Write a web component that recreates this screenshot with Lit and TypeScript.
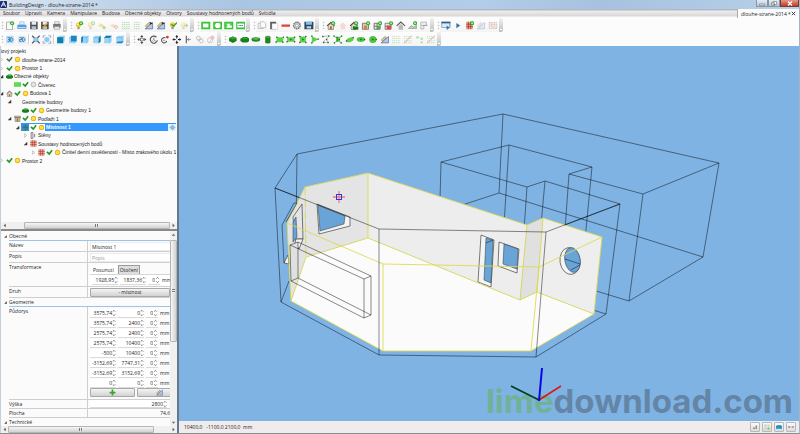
import { LitElement, html, svg, css, nothing } from "lit";
import { customElement } from "lit/decorators.js";
import { classMap } from "lit/directives/class-map.js";

type Pt = [number, number];
const pts = (list: Pt[]) => list.map((p) => p.join(",")).join(" ");

/* ---------- icon pieces, drawn on a 12 x 12 grid ---------- */
const plus = svg`<circle cx="9" cy="3" r="2.7" fill="#1fa01f"/><path d="M9 1.4v3.2M7.4 3h3.2" stroke="#d8ffd0" stroke-width="1"/>`;
const bulb = (c = "#f2c91c") => svg`<circle cx="5.5" cy="5" r="3.4" fill="${c}"/><circle cx="4.7" cy="4.2" r="1.3" fill="#fff3a0"/><rect x="4.2" y="8.2" width="2.8" height="2.6" fill="#8d8d8d"/>`;
const house = (c: string) => svg`<path d="M1 6.5L6 2l5 4.5" fill="none" stroke="#54483c" stroke-width="1.5"/><path d="M2.5 6.3v5h7v-5L6 3.4z" fill="#e6e2da" stroke="#6b6258" stroke-width=".8"/><rect x="4.6" y="7" width="2.8" height="4" fill="${c}"/>`;
const dots = (c: string, n = 4) => svg`${[0, 1, 2, 3].map((r) => Array.from({ length: n }, (_, q) => svg`<circle cx="${1.8 + q * 2.8}" cy="${1.8 + r * 2.8}" r=".8" fill="${c}"/>`))}`;
const greenBox = (inner: unknown) => svg`<rect x="0" y="1" width="12" height="10" fill="#35c135"/><rect x="1.4" y="2.4" width="9.2" height="7.2" fill="#4bd04b"/>${inner}`;
const cad = svg`<path d="M1 10.5h10V2z" fill="#b9c6e6" stroke="#4a62a8" stroke-width=".9"/><path d="M1.5 6.5L6 2l2 1.5-5 5z" fill="#e8cf7c" stroke="#5a5a5a" stroke-width=".7"/>`;
const cube = (side: number) => svg`<path d="M1 3.5L3.5 1H11v7.5L8.5 11H1z" fill="#9bd5f5"/><path d="M1 3.5h7.5V11M8.5 3.5L11 1" fill="none" stroke="#5fb2e0" stroke-width=".8"/>${[
  svg`<rect x="1" y="3" width="8" height="8" fill="#0f7db0"/>`,
  svg`<rect x="3.5" y="1" width="7.5" height="7.5" fill="#1b86bd"/>`,
  svg`<path d="M1 3.5L3.5 1v7.5L1 11z" fill="#1b86bd"/>`,
  svg`<path d="M8.5 3.5L11 1v7.5L8.5 11z" fill="#0f76ab"/>`,
  svg`<path d="M1 3.5L3.5 1H11L8.5 3.5z" fill="#0f76ab"/>`,
  svg`<path d="M1 11l2.500-2.500H11L8.500 11z" fill="#1b86bd"/>`,
][side]}`;
const handles = (list: Pt[]) => svg`${list.map(([x, y]) => svg`<rect x="${x - 0.9}" y="${y - 0.9}" width="1.800" height="1.800" fill="#176617"/>`)}`;
const shape = (list: Pt[]) => svg`<polygon points="${pts(list)}" fill="#5ad04c"/>${handles(list)}`;
const arrows = svg`<path d="M6 0l2 2.600H4zM6 12l2-2.600H4zM0 6l2.600-2v4zM12 6L9.400 4v4z" fill="#333"/>`;

const icons: Record<string, unknown> = {
  fileNew: svg`<path d="M1.500 1.500h6l2 2v8h-8z" fill="#fafafa" stroke="#9a9a9a"/>${plus}`,
  open: svg`<path d="M3 1h6v4H3z" fill="#dfeefc" stroke="#7fa6d0" stroke-width=".6"/><path d="M0 5h12v5.500H0z" fill="#5a9be0"/><path d="M1 8h10v1.500H1z" fill="#b8dcfa"/>`,
  save: svg`<path d="M1 1h10v10H1z" fill="#4a4f58"/><path d="M3 1h6v4H3z" fill="#e8edf2"/><path d="M3 7h6v4H3z" fill="#b8bfc7"/>`,
  saveAs: svg`<path d="M1 1h10v10H1z" fill="#4a4238"/><path d="M3 1h6v4H3z" fill="#e8edf2"/><path d="M3 7h6v4H3z" fill="#b8bfc7"/><path d="M3 9L9.500 2.500" stroke="#e0a02c" stroke-width="1.800"/>`,
  print: svg`<path d="M3 1h6v3H3z" fill="#fff" stroke="#777" stroke-width=".7"/><path d="M1 4h10v5H1z" fill="#73777c"/><path d="M2.500 7.500h7V11h-7z" fill="#eee" stroke="#888" stroke-width=".7"/>`,
  bulbAdd: svg`${bulb()}${plus}`,
  bulbFade: svg`<g opacity=".35">${bulb()}${plus}</g>`,
  spotA: svg`<g opacity=".55"><path d="M1 7l3-4 4 2 3 5-5-2z" fill="#e7d44a"/><circle cx="9" cy="9" r="2" fill="#76bd4a"/></g>`,
  spotB: svg`<g opacity=".5"><path d="M1 6l4-2 4 3-3 2z" fill="#e7d070"/><circle cx="9" cy="8" r="2" fill="none" stroke="#e06050"/></g>`,
  gridA: svg`<g opacity=".6">${dots("#5cc45c")}</g>`,
  gridB: svg`<g opacity=".6">${dots("#74bd74", 3)}</g>`,
  cadAdd: svg`${cad}<path d="M7 1l4 2-3 2z" fill="#222"/>`,
  bulbOk: svg`${bulb()}<path d="M4 4l3 3 4.500-5" fill="none" stroke="#3ca52c" stroke-width="1.800"/>`,
  bulbGo: svg`<g opacity=".35">${bulb()}<path d="M6 6h5M9 4l2 2-2 2" stroke="#3ca52c" stroke-width="1.500" fill="none"/></g>`,
  gRect: greenBox(svg`<rect x="2.500" y="3.500" width="7" height="5" fill="#fff"/>`),
  gPoly: greenBox(svg`<path d="M4 2.800h4l2 3.200-2 3.200H4L2 6z" fill="#fff"/>`),
  gCut: greenBox(svg`<path d="M2.500 3.500h6L6.500 6H10v3H2.500l2-3z" fill="#fff"/>`),
  gCad: greenBox(svg`<rect x="1.500" y="3.500" width="9" height="5" fill="#fff"/><path d="M3 6h6" stroke="#4a62c8" stroke-width="1.500" stroke-dasharray="1.500 .700"/>`),
  copy: svg`<path d="M1 3h6l1 1v6H1z" fill="#f6f6f6" stroke="#b5b5b5"/><path d="M4 1h5l2 2v6H4z" fill="#fafafa" stroke="#b5b5b5"/>`,
  paste: svg`<path d="M1 1h8v10H1z" fill="#5b5b5b"/><path d="M3.500 3.500H11V11H3.500z" fill="#fdfdfd" stroke="#bbb" stroke-width=".6"/>`,
  remove: svg`<rect x="0" y="4.500" width="12" height="3" rx="1" fill="#df4338"/>`,
  gear: svg`<circle cx="6" cy="6" r="4.300" fill="#e8e8e8" stroke="#777" stroke-width="2" stroke-dasharray="2.200 .700"/><circle cx="6" cy="6" r="2" fill="#fff" stroke="#888"/>`,
  saveBlue: svg`<path d="M0 1h12v10H0z" fill="#2f4560"/><path d="M2 1h8v4H2z" fill="#7cc4ef"/><path d="M3 7h6v3H3z" fill="#c8d5df"/>`,
  houseAdd: svg`${house("#b86d28")}${plus}`,
  houseFade: svg`<path d="M1 6.500L6 2l5 4.500H9v4.500H3V6.500z" fill="#f6cfc8" opacity=".8"/>`,
  houseGreen: svg`${house("#2e9a2e")}<rect x="5" y="7.500" width="7" height="4" fill="#187a18"/>${plus}`,
  floorAdd: svg`<path d="M1.500 3h8v8h-8z" fill="#d8cfc2" stroke="#6b5a48"/><path d="M3.500 6h4v5h-4z" fill="#c98a3c"/>${plus}`,
  roomAdd: svg`<path d="M1 3h8v8H1zM1 7h8M5 3v8" fill="#e8e8e8" stroke="#555"/><path d="M5 7h4v4H5z" fill="#3cb83c"/>${plus}`,
  roomRed: svg`<path d="M1 3h8v8H1zM1 7h8" fill="#e8e8e8" stroke="#666"/><path d="M3 6h6v5H3z" fill="#e24a3c"/>${plus}`,
  roof: svg`<path d="M.5 6.500L6 1.500l5.500 5" fill="none" stroke="#555" stroke-width="1.500"/><path d="M3 6.500v5h6v-5L6 4z" fill="#b9b9b9"/>`,
  terrain: svg`<path d="M0 10l4-4 3 2 4-2v4z" fill="#c3c8be" stroke="#7d8377" stroke-width=".7"/>${plus}`,
  wall: svg`<path d="M2 1.500h7.500v4L6 6v4.500H2z" fill="#eee" stroke="#aaa"/><path d="M3 6h8" stroke="#999"/>`,
  calc: svg`<rect x="0" y="1" width="12" height="8" fill="#6a9cc4"/><rect x="1" y="3" width="9.500" height="5" fill="#dcebf6"/><path d="M0 1h12v2H0z" fill="#3c5876"/><path d="M7 6l4 3-4 3z" fill="#2b77bd"/>`,
  play: svg`<path d="M4 2.500L9 6 4 9.500z" fill="#2c72b8"/>`,
  gridRed: svg`<path d="M1 1h9v10H1z" fill="#eda08c"/><path d="M4 1v10M7 1v10M1 4.300h9M1 7.600h9" stroke="#8f3226" stroke-width=".9"/>${plus}`,
  cadFade: svg`<g opacity=".35">${cad}</g>`,
  frameFade: svg`<g opacity=".5"><rect x="1" y="2" width="10" height="8" fill="#f4cfc8" stroke="#9a7a74" stroke-dasharray="2 1"/><rect x="4" y="4.500" width="4" height="3" fill="#fff" stroke="#b36a5c" stroke-width=".7"/></g>`,
  v3d: svg`<rect x="1" y="1" width="10" height="10" fill="#b7def7"/><path d="M3 3.500h2.500V6H3.500M5.500 6v2.500H3M7 3.500v5h1.500L10 7V5L8.500 3.500z" fill="none" stroke="#2c79b3" stroke-width="1.100"/>`,
  v2d: svg`<rect x="1" y="1" width="10" height="10" fill="#cfe8f9"/><path d="M3 3.500h2.500V6H3v2.500h2.500M7 3.500v5h1.500L10 7V5L8.500 3.500z" fill="none" stroke="#3a6a92" stroke-width="1.100"/>`,
  zoomAll: svg`<circle cx="6" cy="6" r="3.500" fill="#8dcbf0"/><path d="M1 1l3 3M11 1L8 4M1 11l3-3M11 11L8 8" stroke="#555" stroke-width="1.500"/>`,
  zoomSel: svg`<circle cx="6" cy="6" r="3.500" fill="#8dcbf0"/><path d="M1 4V1h3M8 1h3v3M11 8v3H8M4 11H1V8" fill="none" stroke="#8ab" stroke-width="1.200"/>`,
  c0: cube(0), c1: cube(1), c2: cube(2), c3: cube(3), c4: cube(4), c5: cube(5),
  move: svg`${arrows}<path d="M6 2v8M2 6h8" stroke="#777"/><rect x="4.200" y="4.200" width="3.600" height="3.600" fill="#fff" stroke="#555" stroke-width=".8"/>`,
  rotate: svg`<path d="M9.500 3A4.700 4.700 0 1 0 10.700 7" fill="none" stroke="#555" stroke-width="1.500"/><path d="M6 3.500v3l2.500 1.500M3.500 7l2 2" fill="none" stroke="#666"/>`,
  rotateRef: svg`<path d="M7 4A3.500 3.500 0 1 0 8.500 8" fill="none" stroke="#555" stroke-width="1.400"/><path d="M3.500 7h3" stroke="#777"/><circle cx="9.500" cy="2.700" r="1.800" fill="#d8351c"/>`,
  moveBold: svg`${arrows}<path d="M6 1v3.500M6 7.500V11M1 6h3.500M7.500 6H11" stroke="#222" stroke-width="1.400"/>`,
  align: svg`<path d="M4 1v10" stroke="#444" stroke-width="1.300"/><path d="M5 6h5M8 4L5.500 6 8 8" stroke="#777" fill="none"/>`,
  chain: svg`<g opacity=".5" fill="none" stroke="#777"><circle cx="4" cy="4" r="2.500"/><circle cx="8" cy="8" r="2.500"/><path d="M3 8l6-4"/></g>`,
  chainCut: svg`<g opacity=".5"><circle cx="5" cy="7" r="3.500" fill="none" stroke="#888"/><circle cx="8" cy="3.500" r="2.700" fill="#ef8d80"/><path d="M3 10l7-7" stroke="#999"/></g>`,
  box: svg`<path d="M1 4l5-2 5 2v4l-5 2.500L1 8z" fill="#16801a"/><path d="M1 4l5 2 5-2-5-2z" fill="#35a336"/>`,
  prism: svg`<path d="M0 5l4-2.500h5L12 5v3l-3 2H3L0 8z" fill="#16801a"/><path d="M2 5l3-1.500h3L10 5z" fill="#48b548"/>`,
  ell3: svg`<ellipse cx="6" cy="6" rx="5.800" ry="3" fill="#1b8a20"/><ellipse cx="6" cy="5" rx="4" ry="1.300" fill="#55bd55"/>`,
  cyl: svg`<path d="M2.500 2.500v7.500h7V2.500z" fill="#1b861f"/><ellipse cx="6" cy="2.500" rx="3.500" ry="1.500" fill="#4a9f4a"/><ellipse cx="6" cy="10" rx="3.500" ry="1.300" fill="#1b861f"/>`,
  s1: shape([[2, 3], [11, 3], [10, 9.5], [1, 9.5]]),
  s2: svg`${shape([[1, 3], [11, 3], [11, 9], [1, 9]])}${handles([[6, 6]])}`,
  s3: svg`${shape([[2, 2], [10, 2], [10, 10], [2, 10]])}${handles([[6, 6]])}`,
  s4: shape([[2, 1.5], [10.5, 5.5], [2, 10.5]]),
  s5: svg`<path d="M2 2l8-1-3 5 2 4H3l2-4" fill="none" stroke="#777" stroke-dasharray="1 .6"/>${handles([[2, 2], [10, 1.500], [7, 6], [9, 10], [3, 10]])}`,
  s6: shape([[1, 1.5], [5, 3], [11, 1.5], [8, 6], [10.5, 10.5], [5, 8], [1.5, 10.5], [5, 5.5]]),
  s7: svg`<ellipse cx="6" cy="6.500" rx="5" ry="3" fill="#5ad04c" transform="rotate(-18 6 6)"/>${handles([[1.500, 8], [10.500, 3.500]])}`,
  s8: svg`<ellipse cx="6" cy="6" rx="5.500" ry="3.300" fill="#4cc440"/>${handles([[6, 6], [11, 6]])}`,
  s9: svg`<circle cx="6" cy="6" r="4.800" fill="#4cc440"/>${handles([[6, 6], [10.500, 6]])}`,
  cad,
  gf1: svg`<g opacity=".45">${dots("#5cc45c", 4)}</g>`,
  gf2: svg`<g opacity=".5">${dots("#74cc74", 4)}<path d="M1 11L11 1" stroke="#e04030" stroke-width="1.300"/></g>`,
  gf3: svg`<g opacity=".5" fill="#6cc66c"><rect x="1" y="2" width="4" height="2.500"/><rect x="7" y="3.500" width="3" height="3"/><rect x="7" y="8.500" width="3" height="2.500"/></g>`,
  /* tree and status glyphs */
  check: svg`<path d="M1.500 5l4 3.500L10.500 2" fill="none" stroke="#27962c" stroke-width="2.800"/>`,
  checkGray: svg`<path d="M1.500 5l4 3.500L10.500 2" fill="none" stroke="#4b6b4d" stroke-width="2.600"/>`,
  lamp: svg`<circle cx="6" cy="6" r="4.600" fill="#e9b41f"/><circle cx="6" cy="6" r="3" fill="#ffe04a"/>`,
  lampOff: svg`<circle cx="6" cy="6" r="4.200" fill="#d6d6d6" stroke="#a2a2a2"/><circle cx="6" cy="6" r="2" fill="#eee"/>`,
  greenTile: svg`<rect x="0" y="2" width="12" height="8" fill="#5fdc55"/>`,
  house: house("#b06a2c"),
  floor: svg`<path d="M1 2h10v2.500H1zM2 4.500h8V11H2z" fill="#d5cdbf" stroke="#6b5a48" stroke-width=".9"/><rect x="4.500" y="6" width="3" height="5" fill="#b37434"/>`,
  room: svg`<path d="M1 1h10v10H1z" fill="#3f82b4"/><path d="M1 6h5v5H1z" fill="#3d9f58"/><path d="M1 6h10M6 1v10" stroke="#2c5f88"/>`,
  walls: svg`<path d="M2 1v10M2 1h3v10H2M8 3v6" fill="none" stroke="#555" stroke-width="1.200"/>`,
  points: svg`<rect x=".5" y=".5" width="11" height="11" fill="#f0a394"/><path d="M4.200.5v11M7.800.5v11M.5 4.200h11M.5 7.800h11" stroke="#a24033" stroke-width="1"/>`,
  expOpen: svg`<path d="M9 3v6H3z" fill="#333"/>`,
  expClosed: svg`<path d="M4.500 3L8 6 4.500 9z" fill="#fff" stroke="#999" stroke-width=".9"/>`,
  up: svg`<path d="M2 8l4-4 4 4" fill="none" stroke="#444" stroke-width="2"/>`,
  down: svg`<path d="M2 4l4 4 4-4" fill="none" stroke="#444" stroke-width="2"/>`,
  upSmall: svg`<path d="M3 8l3-3.500L9 8z" fill="#666"/>`,
  downSmall: svg`<path d="M3 4.500L6 8l3-3.500z" fill="#666"/>`,
  left: svg`<path d="M8 3L4.500 6 8 9z" fill="#555"/>`,
  right: svg`<path d="M4.500 3L8 6 4.500 9z" fill="#555"/>`,
  target: svg`<circle cx="6" cy="6" r="3" fill="#8ec4f0" stroke="#4b8ac4"/><path d="M6 .5v3M6 8.500v3M.5 6h3M8.500 6h3" stroke="#8fb7de"/>`,
  plusBig: svg`<path d="M6 1v10M1 6h10" stroke="#35a829" stroke-width="3"/>`,
  snap: svg`<path d="M2 7h4v3H2zM7 3h3v7H7z" fill="#8e8e8e"/>`,
  quad: svg`<path d="M1 1h4v4H1z" fill="#a9cdec"/><path d="M7 1h4v4H7z" fill="#f0c39c"/><path d="M1 7h4v4H1z" fill="#b5dca8"/><path d="M7 7h4v4H7z" fill="#6bc04c"/>`,
  drawer: svg`<path d="M2 2h8l2 3v5H0V5z" fill="#3aa5dc"/><path d="M0 5h12v1.500H0z" fill="#0d6fa6"/>`,
  axis: svg`<path d="M1 6h10" stroke="#888"/><circle cx="2" cy="6" r="1.500" fill="#3c62d8"/><circle cx="10" cy="6" r="1.500" fill="#e04434"/>`,
};

const icon = (name: string) => html`<svg class="icon" viewBox="0 0 12 12" aria-hidden="true">${icons[name] ?? nothing}</svg>`;

const iconStyles = css`
  .icon { display: block; width: 100%; height: 100%; }
  button { font: inherit; color: inherit; margin: 0; padding: 0; border: 0; background: none; }
`;

/* ---------- toolbars ---------- */
interface ToolGroup { width: number; tools: string[]; }

const toolRows: ToolGroup[][] = [
  [
    { width: 59, tools: ["fileNew", "open", "save", "saveAs", "print"] },
    { width: 117, tools: ["bulbAdd", "bulbFade", "spotA", "spotB", "gridA", "gridB", "cadAdd", "cadAdd", "bulbOk", "bulbGo"] },
    { width: 46, tools: ["gRect", "gPoly", "gCut", "gCad"] },
    { width: 59, tools: ["copy", "paste", "remove", "gear", "saveBlue"] },
    { width: 105, tools: ["houseAdd", "houseFade", "houseGreen", "floorAdd", "roomAdd", "roomRed", "roof", "terrain", "wall"] },
    { width: 59, tools: ["calc", "play", "gridRed", "cadFade", "frameFade"] },
  ],
  [
    { width: 122, tools: ["v3d", "v2d", "|", "zoomAll", "zoomSel", "|", "c0", "c1", "c2", "c3", "c4", "c5"] },
    { width: 81, tools: ["move", "rotate", "rotateRef", "moveBold", "align", "chain", "chainCut"] },
    { width: 210, tools: ["box", "prism", "ell3", "cyl", "s1", "s2", "s3", "s4", "s5", "s6", "s7", "s8", "s9", "cad", "gf1", "gf2", "gf3", "gf2"] },
  ],
];

@customElement("tool-bars")
export class ToolBars extends LitElement {
  static styles = [iconStyles, css`
    :host { display: block; background: #fcfcfc; }
    .row { display: flex; gap: 2px; height: 14px; padding-left: 1px; }
    .group { display: flex; }
    .grip { width: 3px; margin: 3px 0; background: radial-gradient(circle, #c6c6c6 40%, transparent 50%) 0 0 / 3px 3px; }
    .tools { display: flex; align-items: center; background: linear-gradient(#fdfdfd, #f4f4f4); }
    .tool { flex: 1 1 0; min-width: 0; height: 9px; padding: 0 1px; }
    .sep { width: 2px; height: 10px; background: linear-gradient(90deg, #d0d0d0 50%, #fff 50%); }
    .more { width: 4px; margin-right: 1px; background: linear-gradient(#f2f2f2, #bdbdbd); border-radius: 0 2px 2px 0; display: flex; align-items: flex-end; justify-content: center; }
    .more::after { content: ""; width: 2px; height: 1px; margin-bottom: 2px; background: #fff; }
  `];
  render() {
    return toolRows.map((row) => html`<div class="row" role="toolbar">
      ${row.map((g) => html`<div class="group">
        <span class="grip"></span>
        <div class="tools" style="width:${g.width}px">
          ${g.tools.map((t) => t === "|" ? html`<span class="sep"></span>` : html`<button class="tool" aria-label=${t}>${icon(t)}</button>`)}
        </div>
        <button class="more" aria-label="more"></button>
      </div>`)}
    </div>`);
  }
}

/* ---------- project tree ---------- */
interface TreeRow { level: number; exp?: "expOpen" | "expClosed"; icons: string[]; text: string; selected?: boolean; }

const treeRows: TreeRow[] = [
  { level: -1, icons: [], text: "Nový projekt" },
  { level: 0, exp: "expClosed", icons: ["checkGray", "lamp"], text: "dlouhe-strane-2014" },
  { level: 0, exp: "expClosed", icons: ["check", "lamp"], text: "Prostor 1" },
  { level: 0, exp: "expOpen", icons: ["prism"], text: "Obecné objekty" },
  { level: 1, icons: ["greenTile", "check", "lampOff"], text: "Čtverec" },
  { level: 0, exp: "expOpen", icons: ["house", "check", "lamp"], text: "Budova 1" },
  { level: 1, exp: "expOpen", icons: [""], text: "Geometrie budovy" },
  { level: 2, icons: ["prism", "check", "lamp"], text: "Geometrie budovy 1" },
  { level: 1, exp: "expOpen", icons: ["floor", "check", "lamp"], text: "Podlaží 1" },
  { level: 2, exp: "expOpen", icons: ["room", "check", "lamp"], text: "Místnost 1", selected: true },
  { level: 3, exp: "expClosed", icons: ["walls"], text: "Stěny" },
  { level: 3, exp: "expOpen", icons: ["points"], text: "Soustavy hodnocených bodů" },
  { level: 4, exp: "expClosed", icons: ["points", "check", "lamp"], text: "Činitel denní osvětlenosti - Místo zrakového úkolu 1" },
  { level: 0, exp: "expClosed", icons: ["check", "lamp"], text: "Prostor 2" },
];

@customElement("project-tree")
export class ProjectTree extends LitElement {
  static styles = [iconStyles, css`
    :host { display: flex; flex-direction: column; background: #fbfbfb; overflow: hidden; font-family: "Liberation Sans", Arial, sans-serif; }
    .list { display: grid; grid-template-rows: repeat(14, 1fr); height: 118px; margin: 1px 2px 0 -4px; padding: 0; list-style: none; }
    .row { display: flex; align-items: stretch; min-height: 0; white-space: nowrap; }
    .cell { flex: none; width: 8px; display: grid; place-items: center; }
    .cell .icon { width: 7px; height: 7px; }
    .body { display: flex; flex: 1; min-width: 0; align-items: center; }
    .text { padding-left: 1px; line-height: 8px; }
    .selected { background: #3399ff; color: #fff; font-weight: 700; }
    .selected .cell + .cell { background: #fff; height: 7px; }
    .selected .focus { margin-left: auto; background: #e6f2fc; height: 7px; }
  `];
  render() {
    return html`<ul class="list" role="tree">
      ${treeRows.map((r) => html`<li class="row" role="treeitem" aria-selected=${r.selected ? "true" : "false"} style="padding-left:${Math.max(0, r.level) * 8}px">
        ${r.level >= 0 ? html`<span class="cell">${r.exp ? icon(r.exp) : nothing}</span>` : nothing}
        <span class="body ${classMap({ selected: !!r.selected })}">
          ${r.icons.map((n) => html`<span class="cell">${icon(n)}</span>`)}
          <span class="text">${r.text}</span>
          ${r.selected ? html`<span class="cell focus">${icon("target")}</span>` : nothing}
        </span>
      </li>`)}
    </ul>`;
  }
}

/* ---------- scrollbar ---------- */
@customElement("scroll-track")
export class ScrollTrack extends LitElement {
  static properties = { vertical: { type: Boolean, reflect: true }, before: { type: Number }, thumb: { type: Number } };
  declare vertical: boolean;
  declare before: number;
  declare thumb: number;
  static styles = [iconStyles, css`
    :host { display: flex; background: #f0f0f0; height: 7px; align-items: center; }
    :host([vertical]) { flex-direction: column; height: auto; width: 7px; }
    .arrow { flex: none; width: 7px; height: 7px; }
    .track { flex: 1; display: flex; min-width: 0; min-height: 0; align-self: stretch; }
    :host([vertical]) .track { flex-direction: column; }
    .thumb { box-sizing: border-box; border: 1px solid #b5b5b5; border-radius: 1px; background: linear-gradient(#f6f6f6, #d2d2d2); display: grid; place-items: center; }
    :host([vertical]) .thumb { background: linear-gradient(90deg, #f6f6f6, #d2d2d2); }
    .thumb::after { content: ""; width: 4px; height: 3px; background: repeating-linear-gradient(90deg, #777 0 1px, #eee 1px 2px); }
    :host([vertical]) .thumb::after { width: 3px; height: 4px; background: repeating-linear-gradient(#777 0 1px, #eee 1px 2px); }
  `];
  render() {
    return html`<button class="arrow" aria-label="back">${icon(this.vertical ? "upSmall" : "left")}</button>
      <div class="track"><span style="flex:${this.before} 0 0"></span><span class="thumb" style="flex:${this.thumb} 0 0"></span><span style="flex:${100 - this.before - this.thumb} 0 0"></span></div>
      <button class="arrow" aria-label="forward">${icon(this.vertical ? "downSmall" : "right")}</button>`;
  }
}

/* ---------- property sheet ---------- */
const outline: string[][] = [
  ["3575,74", "0", "0"],
  ["3575,74", "2400", "0"],
  ["2575,74", "2400", "0"],
  ["2575,74", "10400", "0"],
  ["-500", "10400", "0"],
  ["-3152,69", "7747,31", "0"],
  ["-3152,69", "3152,69", "0"],
  ["0", "0", "0"],
];

@customElement("property-sheet")
export class PropertySheet extends LitElement {
  static styles = [iconStyles, css`
    :host { display: flex; min-height: 0; overflow: hidden; background: #fbfbfb; }
    .sheet { flex: 1; min-width: 0; overflow: hidden; padding-top: 1px; }
    .head { display: flex; align-items: center; gap: 1px; height: 9px; padding-left: 2px; margin: 0; font-size: inherit; font-weight: 400; }
    .head .icon { width: 5px; height: 5px; flex: none; }
    .head span { flex: 1; line-height: 8px; border-bottom: 1px solid #9fc3e6; }
    .prop { display: grid; grid-template-columns: 79px 1fr; box-sizing: border-box; margin-left: 8px; min-height: 11px; border-bottom: 1px solid #cfcfcf; }
    .prop.short { height: 9px; min-height: 0; }
    .name { line-height: 7px; padding-top: 1px; border-right: 1px solid #cfcfcf; }
    .value { min-width: 0; overflow: hidden; padding: 1px 0 0 2px; white-space: nowrap; display: flex; flex-direction: column; }
    .short .value { padding-top: 0; }
    input { box-sizing: border-box; min-width: 0; width: 100%; height: 8px; margin: 0; padding: 0 2px; border: 0; font: inherit; color: inherit; background: transparent; outline: 0; }
    input::placeholder { color: #999; opacity: 1; }
    .plain { background: #fff; border: 1px solid #ececec; border-right: 0; height: 9px; padding: 0 1px; }
    .num { display: flex; align-items: center; flex: none; box-sizing: border-box; height: 9px; width: 26px; background: #fff; border-bottom: 1px solid #dadada; }
    .num.z { width: 12px; }
    .num.wide { width: auto; margin-right: 3px; height: 8px; }
    .num input { text-align: right; padding: 0; }
    .spin { flex: none; width: 5px; height: 8px; display: grid; }
    .num:not(.z) .spin { width: 4px; }
    .spin button { height: 4px; }
    .line { display: flex; align-items: center; gap: 2px; height: 10px; }
    .line .end { flex: none; width: 3px; height: 8px; background: #ddd; border-left: 1px solid #999; }
    .tabs { display: flex; align-items: flex-end; gap: 1px; height: 10px; }
    .tab { height: 9px; line-height: 8px; padding: 0 3px; background: #fff; }
    .tab.off { height: 9px; line-height: 7px; padding: 0 1px; background: #dedede; border: 1px solid #9b9b9b; border-bottom: 0; }
    .pane { background: #fff; border-top: 1px solid #d6d6d6; padding-left: 2px; margin-bottom: 1px; }
    .push { box-sizing: border-box; height: 9px; line-height: 7px; border: 1px solid #a9a9a9; border-radius: 1px; background: linear-gradient(#f4f4f4, #d2d2d2); text-align: center; }
    .pair { display: flex; gap: 2px; padding-bottom: 2px; }
    .pair .push { flex: none; width: 45px; display: grid; place-items: center; }
    .pair .icon { width: 7px; height: 7px; }
    .area { text-align: right; line-height: 8px; }
  `];
  private num(label: string, value: string, kind = "") {
    return html`<span class="num ${kind}"><input aria-label=${label} .value=${value}><span class="spin"><button type="button" aria-label="up">${icon("up")}</button><button type="button" aria-label="down">${icon("down")}</button></span></span>`;
  }
  private vector(label: string, v: string[]) {
    return html`<div class="line">${this.num(label + " X", v[0])}${this.num(label + " Y", v[1])}${this.num(label + " Z", v[2], "z")}<span>mm</span><span class="end"></span></div>`;
  }
  render() {
    return html`<form class="sheet" @submit=${(e: Event) => e.preventDefault()}>
      <h2 class="head">${icon("expOpen")}<span>Obecné</span></h2>
      <div class="prop"><label class="name" for="name">Název</label><div class="value"><input id="name" class="plain" .value=${"Místnost 1"}></div></div>
      <div class="prop"><label class="name" for="note">Popis</label><div class="value"><input id="note" class="plain" placeholder="Popis"></div></div>
      <div class="prop"><span class="name">Transformace</span><div class="value">
        <div class="tabs"><button type="button" class="tab">Posunutí</button><button type="button" class="tab off">Otočení</button></div>
        <div class="pane">${this.vector("Posunutí", ["1928,95", "1837,36", "0"])}</div>
      </div></div>
      <div class="prop"><span class="name">Druh</span><div class="value"><button type="button" class="push">- místnost</button></div></div>
      <h2 class="head">${icon("expOpen")}<span>Geometrie</span></h2>
      <div class="prop"><span class="name">Půdorys</span><div class="value">
        ${outline.map((v, i) => this.vector(`Bod ${i + 1}`, v))}
        <div class="pair"><button type="button" class="push" aria-label="add">${icon("plusBig")}</button><button type="button" class="push" aria-label="cad">${icon("cad")}</button></div>
      </div></div>
      <div class="prop short"><span class="name">Výška</span><div class="value">${this.num("Výška", "2800", "wide")}</div></div>
      <div class="prop short"><span class="name">Plocha</span><div class="value area">74,6</div></div>
      <h2 class="head">${icon("expOpen")}<span>Technické</span></h2>
    </form>
    <scroll-track vertical .before=${1} .thumb=${56}></scroll-track>`;
  }
}

/* ---------- 3D view ---------- */
const roofLine: Pt[] = [[275, 188], [297, 154], [503, 114], [719, 163], [643, 194], [569, 174], [592, 167], [509, 145], [441, 162], [527, 187], [545, 181], [620, 204], [546, 232], [379, 229]];
const behind: Pt[][] = [
  [[297, 154], [296, 230]],
  [[503, 114], [499, 193], [703, 257], [629, 301], [560, 280]],
  [[499, 193], [450, 209]],
  [[719, 163], [703, 257]],
  [[643, 194], [629, 301]],
  [[569, 174], [565, 230]],
  [[592, 167], [585, 240]],
  [[509, 145], [504, 225]],
  [[441, 162], [440, 200]],
  [[527, 187], [524, 230]],
  [[545, 181], [541, 225]],
  [[620, 204], [606, 314], [580, 306]],
];
const surfaces: { fill: string; at: Pt[] }[] = [
  { fill: "#e3e3e3", at: [[287, 223], [305, 187], [306, 257], [291, 301]] },
  { fill: "#e4e4e4", at: [[305, 187], [368, 173], [368, 238], [306, 257]] },
  { fill: "#ededed", at: [[368, 173], [527, 225], [520, 300], [368, 238]] },
  { fill: "#e0e0e0", at: [[527, 225], [543, 218], [537, 292], [520, 300]] },
  { fill: "#eeeeee", at: [[543, 218], [602, 237], [594, 314], [537, 292]] },
  { fill: "#fbfbfb", at: [[291, 301], [306, 257], [368, 238], [520, 300], [537, 292], [594, 314], [531, 351], [383, 351]] },
];
const front: Pt[][] = [
  [[275, 188], [379, 229], [546, 232], [620, 204]],
  [[275, 188], [281, 302], [379, 355], [536, 357], [606, 314]],
  [[379, 229], [379, 355]],
  [[546, 232], [536, 357]],
  [[281, 302], [289, 281]],
  [[290, 245], [298, 242], [371, 276], [364, 279], [290, 245], [291, 281], [364, 318], [371, 315], [371, 276]],
  [[364, 279], [364, 318]],
  [[298, 242], [298, 278], [371, 315]],
  [[298, 278], [291, 281]],
  [[297, 203], [294, 203], [282, 225], [284, 263]],
  [[286, 222], [297, 203]],
];

@customElement("model-view")
export class ModelView extends LitElement {
  static styles = css`
    :host { display: block; position: relative; min-height: 0; background: #7fb3e4; overflow: hidden; }
    .scene { display: block; width: 100%; height: 100%; }
    .wire { fill: none; stroke: #000; stroke-opacity: .58; stroke-width: .8; }
    .edge { fill: none; stroke: #dcd94e; stroke-width: 1; stroke-opacity: .85; }
    .frame { fill: #f4f4f4; stroke: #444; stroke-width: .7; }
    .shade { fill: #e4e4e4; }
    .hole { fill: #69a4d8; stroke: #333; stroke-width: .5; }
    .brand { position: absolute; right: 6px; bottom: 0; font: 700 33px/40px "Inter", "Open Sans", sans-serif; color: #6485a6; white-space: nowrap; }
    .lime { color: #70b298; }
    .axes { position: absolute; right: 236px; bottom: 18px; width: 54px; height: 36px; }
  `;
  render() {
    const wire = (l: Pt[]) => svg`<polyline class="wire" points="${pts(l)}"/>`;
    return html`<svg class="scene" viewBox="179 46 620 375" preserveAspectRatio="xMidYMid meet" role="img" aria-label="3D">
      <polygon class="wire" points="${pts(roofLine)}"/>
      ${behind.map(wire)}
      ${surfaces.map((s) => svg`<polygon points="${pts(s.at)}" fill="${s.fill}"/>`)}
      <polygon class="frame" points="317,204 350,217 350,226 319,234"/>
      <polygon class="hole" points="318,205 345,216 344,224 320,231"/>
      <polygon class="frame" points="481,235 494,240 491,287 478,282"/>
      <polygon class="hole" points="486,238 493,240 491,283 484,280"/>
      <polyline class="wire" points="486,243 493,240"/>
      <polygon class="frame" points="499,242 519,249 517,273 498,266"/>
      <polygon class="hole" points="504,244 518,249 517,269 503,264"/>
      <ellipse class="frame" cx="570" cy="261" rx="10" ry="13.500" transform="rotate(-8 570 261)"/>
      <ellipse class="hole" cx="572.500" cy="260" rx="7.700" ry="12.500" transform="rotate(-10 572.500 260)"/>
      <path class="wire" d="M565 259l15 5M571 270l9-5"/>
      <polygon class="frame shade" points="293,217 302,204 303,239 295,239"/>
      <polygon class="hole" points="293,222 296,217 297,237 293,242"/>
      <polygon class="frame" points="296,239 303,239 299,249 295,243"/>
      <polygon class="frame" points="288,255 284,263 289,264"/>
      <polygon points="290,245 298,242 298,278 291,281" fill="#e0e0e0"/>
      <polygon class="edge" points="287,223 305,187 368,173 527,225 543,218 602,237 539,267 383,264"/>
      <polygon class="edge" points="291,301 306,257 368,238 520,300 537,292 594,314 531,351 383,351"/>
      <path class="edge" d="M287 223L291 301M368 173V238M527 225L520 300M543 218L537 292M602 237L594 314M539 267L531 351M383 264V351"/>
      <path class="edge" d="M305 187L306 257" stroke-dasharray="8 4"/>
      ${front.map(wire)}
      <path d="M339 191v12M333 197h12" stroke="#ec7f86" stroke-width="1.300"/>
      <rect x="336.500" y="194.500" width="5" height="5" fill="none" stroke="#3a34e0"/>
    </svg>
    <div class="brand"><span class="lime">lime</span>download.com</div>
    <svg class="axes" viewBox="510 367 54 36" aria-hidden="true">
      <path d="M540 400L512 386" stroke="#063d1c" stroke-width="1.800"/>
      <path d="M540 400L562 386" stroke="#e01616" stroke-width="1.500"/>
      <path d="M540 401L543 368" stroke="#0808e6" stroke-width="2"/>
    </svg>`;
  }
}

/* ---------- application shell ---------- */
const menus = ["Soubor", "Upravit", "Kamera", "Manipulace", "Budova", "Obecné objekty", "Otvory", "Soustavy hodnocených bodů", "Svítidla"];

@customElement("app-root")
export class AppRoot extends LitElement {
  static styles = [iconStyles, css`
    :host { display: flex; flex-direction: column; height: 100vh; box-sizing: border-box; font: 5px/8px "Open Sans", "Noto Sans", sans-serif; color: #1c1c1c; background: #f0eeee; border-bottom: 1px solid #8a8f96; border-right: 1px solid #a3b4c6; overflow: hidden; }
    .title { display: flex; align-items: center; height: 9px; background: linear-gradient(100deg, #d9e5f2 0, #c3d6ea 12%, #a8c5e2 30%, #b3cde8 60%, #a6c2e0 75%, #b9d0e8 100%); }
    .logo { width: 7px; height: 7px; margin-right: 2px; background: #1d2a6b; border-radius: 1px; }
    .name { font-size: 5px; font-weight: 400; margin: 0; }
    .window { display: flex; margin-left: auto; align-self: flex-start; }
    .window button { box-sizing: border-box; width: 12px; height: 7px; border: 1px solid #8796a8; border-top: 0; background: linear-gradient(#e4ecf4, #b6c6d8); display: grid; place-items: center; }
    .window .close { width: 19px; background: linear-gradient(#e29a8a, #c53a22); border-color: #7d3a30; }
    .window .icon { width: 6px; height: 5px; }
    .menu { display: flex; align-items: stretch; height: 9px; background: linear-gradient(#b0b8c2 0 1px, #eeeced 2px, #d9d7d8 7px, #fcfcfc 8px); }
    .items { display: flex; gap: 5px; padding-left: 3px; }
    .items button { line-height: 9px; }
    .doc { box-sizing: border-box; margin-left: auto; width: 62px; display: flex; align-items: center; justify-content: space-between; padding: 0 3px; background: #fcfcfc; border-left: 1px solid #aaa; white-space: nowrap; }
    .doc button { width: 5px; height: 5px; }
    .main { flex: 1; min-height: 0; display: grid; grid-template-columns: 179px minmax(0, 1fr); }
    .side { display: flex; flex-direction: column; min-height: 0; min-width: 0; box-sizing: border-box; border-left: 1px solid #c5ced8; border-right: 2px solid #66788c; background: #fbfbfb; }
    project-tree { flex: none; height: 176px; }
    .split { height: 2px; background: #8a8a8a; flex: none; }
    property-sheet { flex: 1; }
    scroll-track { flex: none; }
    .work { display: flex; flex-direction: column; min-width: 0; }
    model-view { flex: 1; }
    .status { display: flex; align-items: center; height: 12px; padding: 0 3px 0 5px; gap: 2px; background: #f0eced; flex: none; }
    .status output { margin-right: auto; white-space: pre; }
    .status button { box-sizing: border-box; width: 10px; height: 10px; padding: 1px; border: 1px solid #b8b8b8; border-radius: 1px; background: linear-gradient(#fafafa, #dcdcdc); }
  `];
  render() {
    return html`
      <header class="title">
        <span class="logo"><svg class="icon" viewBox="0 0 12 12" aria-hidden="true"><path d="M2 10L6 2l4 8M4 7h4" fill="none" stroke="#d7e2ff" stroke-width="1.800"/></svg></span>
        <h1 class="name">BuildingDesign - dlouhe-strane-2014 *</h1>
        <div class="window">
          <button aria-label="minimize"><svg class="icon" viewBox="0 0 12 10"><path d="M1 6h10v2.500H1z" fill="#fff" stroke="#555"/></svg></button>
          <button aria-label="restore"><svg class="icon" viewBox="0 0 12 10"><path d="M4 1h7v6H4zM1 3.500h6V9H1z" fill="#fff" stroke="#555"/></svg></button>
          <button class="close" aria-label="close"><svg class="icon" viewBox="0 0 12 10"><path d="M2 1l8 8M10 1L2 9" stroke="#fff" stroke-width="2.500"/></svg></button>
        </div>
      </header>
      <nav class="menu">
        <div class="items">${menus.map((m) => html`<button>${m}</button>`)}</div>
        <div class="doc"><span>dlouhe-strane-2014 *</span><button aria-label="close tab"><svg class="icon" viewBox="0 0 12 12" aria-hidden="true"><path d="M2 2l8 8M10 2l-8 8" stroke="#222" stroke-width="2"/></svg></button></div>
      </nav>
      <tool-bars></tool-bars>
      <main class="main">
        <aside class="side">
          <project-tree></project-tree>
          <scroll-track .before=${10} .thumb=${90}></scroll-track>
          <div class="split"></div>
          <property-sheet></property-sheet>
          <scroll-track .before=${0} .thumb=${90}></scroll-track>
        </aside>
        <section class="work">
          <model-view></model-view>
          <footer class="status">
            <output>10400,0   -1100,0 2100,0  mm</output>
            ${["snap", "quad", "drawer", "axis"].map((n) => html`<button aria-label=${n}>${icon(n)}</button>`)}
          </footer>
        </section>
      </main>`;
  }
}
